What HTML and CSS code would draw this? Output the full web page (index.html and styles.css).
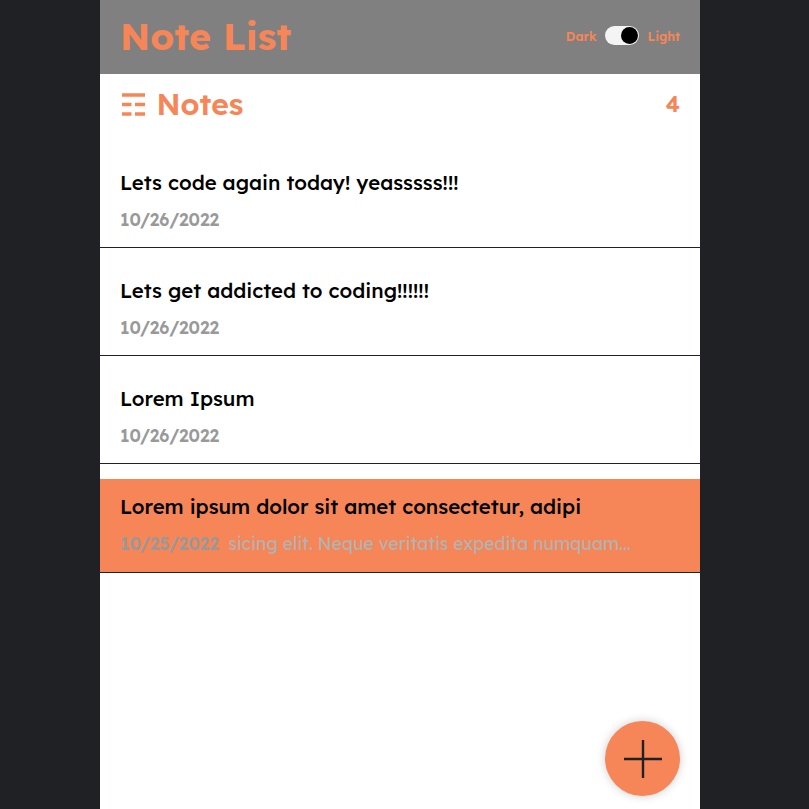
FILE: index.html
```html
<!DOCTYPE html>
<html lang="en">
<head>
<meta charset="utf-8">
<title>Note List</title>
<link rel="stylesheet" href="styles.css">
</head>
<body>
<div class="app">
  <header class="header">
    <h1>Note List</h1>
    <div class="theme">
      <span class="dark">Dark</span>
      <span class="switch"><span class="knob"></span></span>
      <span class="light">Light</span>
    </div>
  </header>
  <main>
    <div class="notes-header">
      <svg class="icon" width="23" height="23" viewBox="0 0 23 23"><path d="M0 2H23M0 11.5H9.5M13 11.5H23M0 21H9.5M13 21H23"/></svg>
      <h2>Notes</h2>
      <span class="count">4</span>
    </div>
    <div class="list">
      <article class="note"><h3>Lets code again today! yeasssss!!!</h3><p><b>10/26/2022</b></p></article>
      <article class="note"><h3>Lets get addicted to coding!!!!!!</h3><p><b>10/26/2022</b></p></article>
      <article class="note"><h3>Lorem Ipsum</h3><p><b>10/26/2022</b></p></article>
      <article class="note active"><h3>Lorem ipsum dolor sit amet consectetur, adipi</h3><p><b>10/25/2022</b><span>sicing elit. Neque veritatis expedita numquam...</span></p></article>
    </div>
  </main>
  <button class="add" aria-label="Add note"><svg width="39" height="39" viewBox="0 0 39 39"><path d="M1 20H39M20 1V39"/></svg></button>
</div>
</body>
</html>
```
FILE: styles.css
```css
* { box-sizing: border-box; margin: 0; padding: 0; }
body {
  background: #202124;
  font-family: Lexend, Inter, sans-serif;
  font-feature-settings: "cv11";
}
.app {
  position: relative;
  width: 600px;
  height: 809px;
  margin-left: 100px;
  background: #fff;
  overflow: hidden;
}
.header {
  display: flex;
  align-items: center;
  justify-content: space-between;
  height: 74px;
  padding: 0 20px;
  background: #808080;
  color: #f68657;
}
h1 { font-size: 37.5px; font-weight: 700; line-height: 72px; padding-bottom: 2px; white-space: nowrap; }
.theme { display: flex; align-items: center; padding-bottom: 2px; font-size: 12.5px; font-weight: 600; }
.switch {
  display: flex;
  justify-content: flex-end;
  align-items: center;
  width: 34px;
  height: 19px;
  margin: 0 9px 1px 8px;
  padding-right: 1px;
  border-radius: 10px;
  background: #f4f4f4;
}
.knob { width: 17px; height: 17px; border-radius: 50%; background: #000; }
.notes-header {
  display: flex;
  align-items: center;
  height: 61px;
  padding: 0 20px 0 22px;
  color: #f68657;
}
.icon { stroke: #f68657; stroke-width: 3.4; }
h2 { margin-left: 11.5px; padding-bottom: 2px; font-size: 30px; font-weight: 600; }
.count { margin-left: auto; padding-bottom: 2px; font-size: 22.4px; font-weight: 600; }
.list { padding-top: 20px; }
.note {
  height: 93px;
  margin-bottom: 15px;
  padding: 14px 20px 0;
  border-bottom: 1px solid #202124;
}
.note.active { height: 94px; background: #f68657; }
h3 { font-size: 20.38px; font-weight: 500; line-height: 28px; white-space: nowrap; color: #000; }
.note p { display: flex; margin-top: 8px; font-size: 17.5px; line-height: 28px; white-space: nowrap; }
.note b { width: 108.6px; font-weight: 600; color: #999; }
.note p span { color: #b2b2b2; }
.add {
  position: absolute;
  right: 20px;
  bottom: 13px;
  display: flex;
  align-items: center;
  justify-content: center;
  width: 75px;
  height: 75px;
  border: 0;
  border-radius: 50%;
  background: #f68657;
  box-shadow: 0 0 10px rgba(0, 0, 0, 0.2);
}
.add svg { stroke: #202124; stroke-width: 2.4; }
```
